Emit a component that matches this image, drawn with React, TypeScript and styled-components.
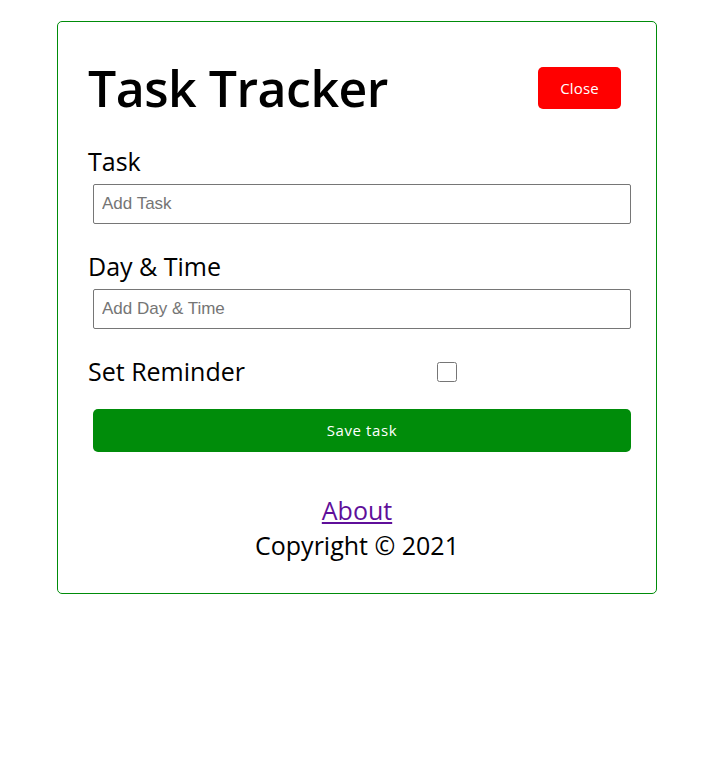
import React from "react";
import styled, { createGlobalStyle } from "styled-components";

const GlobalStyle = createGlobalStyle`
  * { box-sizing: border-box; margin: 0; padding: 0; }
  body {
    margin: 0;
    padding-right: 3px;
    background: #ffffff;
    font-family: "Open Sans", "DejaVu Sans", sans-serif;
    color: #000;
  }
`;

const Container = styled.div`
  width: 600px;
  margin: 21px auto 0;
  border: 1px solid #008c0a;
  border-radius: 5px;
  padding: 30px;
`;

const Header = styled.header`
  display: flex;
  justify-content: space-between;
  align-items: center;
  height: 72px;
  margin-bottom: 20px;
`;

const Title = styled.h1`
  font-size: 50px;
  font-weight: 600;
  line-height: 68px;
  letter-spacing: -0.5px;
`;

const Btn = styled.button<{ $bg: string; $block?: boolean }>`
  display: ${(p) => (p.$block ? "block" : "inline-block")};
  width: ${(p) => (p.$block ? "100%" : "auto")};
  background: ${(p) => p.$bg};
  color: #fff;
  border: none;
  border-radius: 5px;
  padding: 10px ${(p) => (p.$block ? "20px" : "22px")};
  margin: 5px;
  font-family: "Open Sans", sans-serif;
  font-size: 15px;
  line-height: 22.5px;
  letter-spacing: ${(p) => (p.$block ? "0.6px" : "0.2px")};
  cursor: pointer;
`;

const Form = styled.form``;

const Control = styled.div`
  display: flow-root;
  margin: 20px 0;
`;

const CheckControl = styled.div`
  margin: 20px 0;
  display: flex;
  align-items: center;
  justify-content: space-between;
`;

const Label = styled.label<{ $flex?: number }>`
  display: block;
  font-size: 25px;
  line-height: 35px;
  ${(p) => (p.$flex ? `flex: ${p.$flex};` : "")}
`;

const Input = styled.input`
  display: block;
  width: 100%;
  height: 40px;
  margin: 5px;
  padding: 3px 8px;
  border: 1px solid #767676;
  border-radius: 2px;
  font-family: "Liberation Sans", Arial, sans-serif;
  font-size: 17px;
  &::placeholder { color: #757575; }
`;

const CheckWrap = styled.div`
  flex: 2;
  display: flex;
  justify-content: center;
`;

const Check = styled.input`
  width: 20px;
  height: 20px;
  margin: 0;
`;

const SubmitWrap = styled.div`
  margin-top: 20px;
`;

const Footer = styled.footer`
  margin-top: 41px;
  text-align: center;
  font-size: 25px;
  line-height: 35px;
`;

const AboutLink = styled.a`
  color: #5f0f9a;
  text-decoration: underline;
`;

export default function App() {
  return (
    <>
      <GlobalStyle />
      <Container>
        <Header>
          <Title>Task Tracker</Title>
          <Btn $bg="#ff0000">Close</Btn>
        </Header>
        <Form onSubmit={(e) => e.preventDefault()}>
          <Control>
            <Label>Task</Label>
            <Input type="text" placeholder="Add Task" />
          </Control>
          <Control>
            <Label>Day &amp; Time</Label>
            <Input type="text" placeholder="Add Day & Time" />
          </Control>
          <CheckControl>
            <Label $flex={1}>Set Reminder</Label>
            <CheckWrap>
              <Check type="checkbox" />
            </CheckWrap>
          </CheckControl>
          <SubmitWrap>
            <Btn $bg="#008c0a" $block type="submit">Save task</Btn>
          </SubmitWrap>
        </Form>
        <Footer>
          <div><AboutLink href="#">About</AboutLink></div>
          <div>Copyright &copy; 2021</div>
        </Footer>
      </Container>
    </>
  );
}
